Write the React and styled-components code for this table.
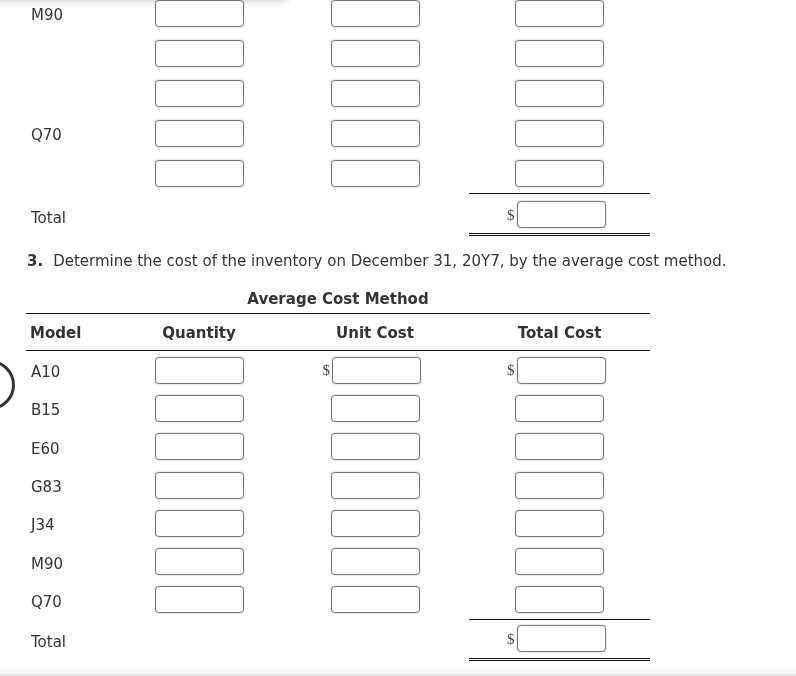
import React from "react";
import styled, { createGlobalStyle, css } from "styled-components";

const Global = createGlobalStyle`
  html, body {
    margin: 0;
    padding: 0;
    background: #fff;
    overflow: hidden;
  }
  body {
    font-family: "DejaVu Sans", Verdana, sans-serif;
    font-size: 15px;
    color: #333;
  }
`;

const Page = styled.div`
  position: relative;
  width: 624px;
  margin: -7px 0 0 26px;
`;

const Grid = styled.div`
  display: grid;
  grid-template-columns: 91px 164px 188px 181px;
`;

const Cell = styled.div`
  display: flex;
  align-items: center;
  justify-content: ${(p) => (p.$left ? "flex-start" : "center")};
  padding-left: ${(p) => (p.$left ? "5px" : "0")};
  height: ${(p) => p.$h || 40}px;
  box-sizing: border-box;
  ${(p) =>
    p.$total &&
    css`
      height: auto;
      padding-top: ${p.$pt || 7}px;
      padding-bottom: ${p.$pb || 5}px;
    `}
  ${(p) =>
    p.$rule &&
    css`
      border-top: 1px solid #111;
      border-bottom: 3px double #111;
    `}
`;

const Label = styled.span`
  position: relative;
  top: 2px;
`;

const InputWrap = styled.span`
  position: relative;
  display: inline-block;
  margin-left: ${(p) => (p.$dollar ? "3px" : "0")};
  ${(p) =>
    p.$dollar &&
    css`
      &::before {
        content: "$";
        position: absolute;
        right: 100%;
        margin-right: 2px;
        top: 50%;
        transform: translateY(-50%);
        font-family: "Liberation Serif", "Times New Roman", serif;
        font-size: 15px;
        color: #444;
      }
    `}
`;

const Box = styled.input`
  display: block;
  width: 89px;
  height: 27px;
  box-sizing: border-box;
  border: 1px solid #767676;
  border-radius: 4px;
  box-shadow: 0 0 2px rgba(0, 0, 0, 0.28);
  background: #fff;
  padding: 0 4px;
  font: inherit;
  outline: none;
`;

const Field = ({ dollar }) => (
  <InputWrap $dollar={dollar}>
    <Box type="text" />
  </InputWrap>
);

const Question = styled.p`
  margin: 15px 0 0 1px;
  line-height: 20px;
  white-space: nowrap;
`;

const Num = styled.b`
  margin-right: 10px;
`;

const Title = styled.div`
  margin: 18px 0 4px;
  line-height: 20px;
  font-weight: bold;
  text-align: center;
`;

const HeadRow = styled(Grid)`
  border-top: 1px solid #111;
  border-bottom: 1px solid #111;
  height: 38px;
  padding-top: 2px;
  box-sizing: border-box;
  font-weight: bold;
  align-items: center;
`;

const HeadCell = styled.div`
  text-align: ${(p) => (p.$left ? "left" : "center")};
  padding-left: ${(p) => (p.$left ? "4px" : "0")};
`;

const TopShade = styled.div`
  position: fixed;
  top: -12px;
  left: -10px;
  width: 298px;
  height: 12px;
  border-radius: 8px;
  background: #fff;
  box-shadow: 0 1px 6px rgba(0, 0, 0, 0.2);
`;

const BottomShade = styled.div`
  position: fixed;
  left: 0;
  right: 0;
  bottom: 0;
  height: 8px;
  background: linear-gradient(to bottom, rgba(0, 0, 0, 0), rgba(0, 0, 0, 0.04));
  border-bottom: 2px solid #ebebeb;
`;

const Ring = styled.div`
  position: absolute;
  left: -61px;
  top: 367px;
  width: 50px;
  height: 50px;
  box-sizing: border-box;
  border: 3px solid #333;
  border-radius: 50%;
`;

const topRows = ["M90", "", "", "Q70", ""];
const models = ["A10", "B15", "E60", "G83", "J34", "M90", "Q70"];

export default function App() {
  return (
    <>
      <Global />
      <TopShade />
      <Page>
        <Ring />
        <Grid>
          {topRows.map((m, i) => (
            <React.Fragment key={i}>
              <Cell $left>
                <Label>{m}</Label>
              </Cell>
              <Cell>
                <Field />
              </Cell>
              <Cell>
                <Field />
              </Cell>
              <Cell>
                <Field />
              </Cell>
            </React.Fragment>
          ))}
          <Cell $left $total>
            <Label>Total</Label>
          </Cell>
          <Cell $total />
          <Cell $total />
          <Cell $total $rule>
            <Field dollar />
          </Cell>
        </Grid>

        <Question>
          <Num>3.</Num>Determine the cost of the inventory on December 31, 20Y7, by the average cost method.
        </Question>

        <Title>Average Cost Method</Title>
        <HeadRow>
          <HeadCell $left>Model</HeadCell>
          <HeadCell>Quantity</HeadCell>
          <HeadCell>Unit Cost</HeadCell>
          <HeadCell>Total Cost</HeadCell>
        </HeadRow>
        <Grid>
          {models.map((m, i) => (
            <React.Fragment key={m}>
              <Cell $left $h={38.3}>
                <Label>{m}</Label>
              </Cell>
              <Cell $h={38.3}>
                <Field />
              </Cell>
              <Cell $h={38.3}>
                <Field dollar={i === 0} />
              </Cell>
              <Cell $h={38.3}>
                <Field dollar={i === 0} />
              </Cell>
            </React.Fragment>
          ))}
          <Cell $left $total $pt={5} $pb={6}>
            <Label>Total</Label>
          </Cell>
          <Cell $total $pt={5} $pb={6} />
          <Cell $total $pt={5} $pb={6} />
          <Cell $total $rule $pt={5} $pb={6}>
            <Field dollar />
          </Cell>
        </Grid>
      </Page>
      <BottomShade />
    </>
  );
}
